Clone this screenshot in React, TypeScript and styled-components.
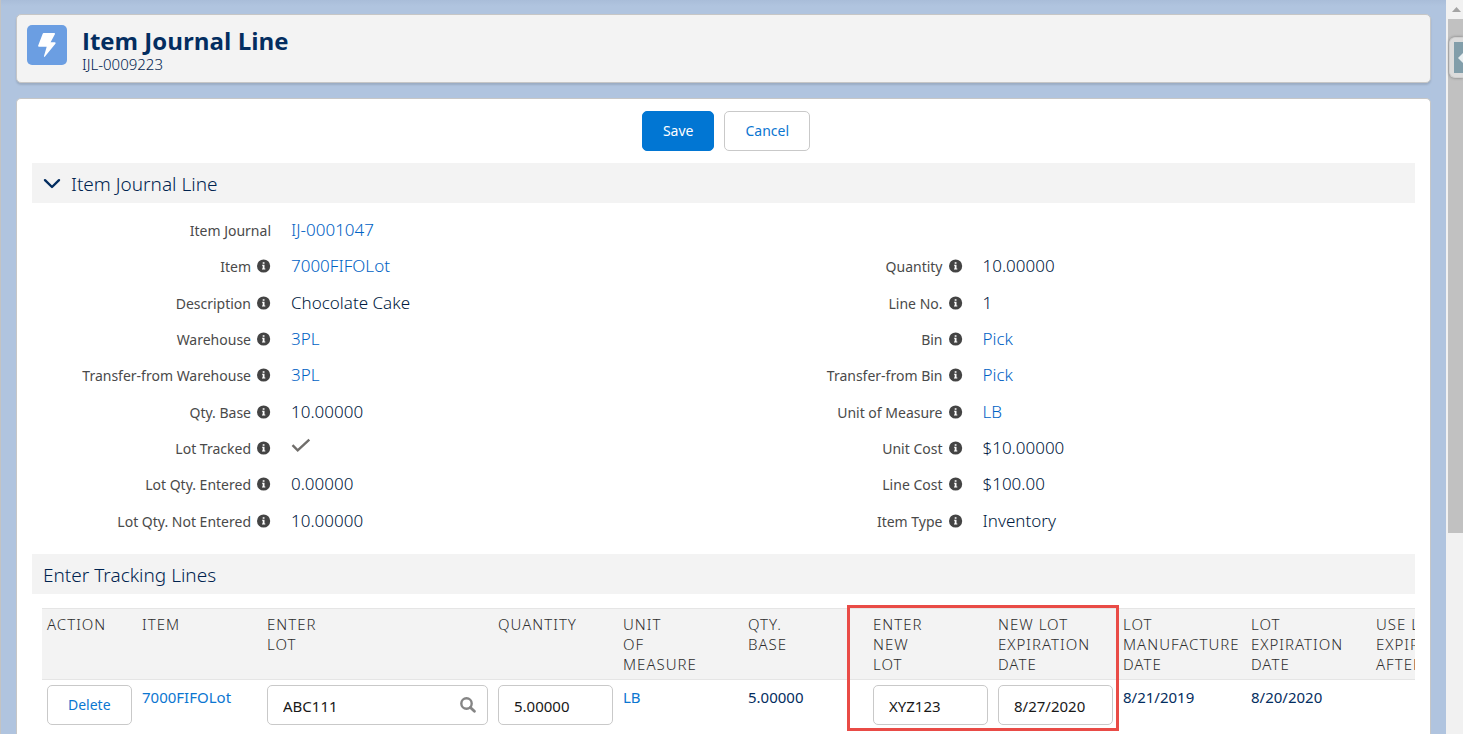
import React from 'react';
import styled, { createGlobalStyle } from 'styled-components';

const GlobalStyle = createGlobalStyle`
  *, *::before, *::after { box-sizing: border-box; }
  body {
    margin: 0;
    background: #b0c4df;
    color: #00234f;
    font-family: 'Noto Sans', 'Open Sans', sans-serif;
    font-size: 15px;
    font-weight: 300;
  }
`;

const Frame = styled.div`
  display: flex;
  height: 100vh;
  overflow: hidden;
`;

const Main = styled.main`
  flex: 1;
  min-width: 0;
  display: flex;
  flex-direction: column;
  gap: 15px;
  padding: 14px 15px 0;
  border-left: 1px solid #c3c3c3;
  background: linear-gradient(#a9bdd9, #b0c4df 6px);
`;

const PageHeader = styled.header`
  display: flex;
  flex: none;
  gap: 15px;
  height: 69px;
  padding: 10px;
  background: #f3f3f3;
  border: 1px solid #c6c6c6;
  border-radius: 5px;
  box-shadow: 0 2px 2px rgba(0, 0, 0, 0.12);
`;

const HeaderIcon = styled.span`
  display: flex;
  align-items: center;
  justify-content: center;
  width: 40px;
  height: 40px;
  border-radius: 5px;
  background: #6b9ee2;
`;

const Title = styled.h1`
  margin: 0;
  color: #032d60;
  font-family: 'Open Sans', 'Noto Sans', sans-serif;
  font-size: 24px;
  line-height: 32px;
  font-weight: 700;
`;

const RecordName = styled.p`
  margin: 0;
  font-size: 15px;
  line-height: 14px;
`;

const Card = styled.section`
  flex: 1 0 auto;
  padding: 12px 15px 0;
  background: #fff;
  border: 1px solid #c6c6c6;
  border-bottom: 0;
  border-radius: 5px 5px 0 0;
`;

const Toolbar = styled.div`
  display: flex;
  justify-content: center;
  gap: 10px;
  padding: 0 0 12px 5px;
`;

const Button = styled.button<{ $primary?: boolean }>`
  height: 40px;
  padding: 0 20px 2px;
  border: 1px solid ${(p) => (p.$primary ? '#0176d3' : '#c9c9c9')};
  border-radius: 5px;
  background: ${(p) => (p.$primary ? '#0176d3' : '#fff')};
  color: ${(p) => (p.$primary ? '#fff' : '#0b76d1')};
  font-family: inherit;
  font-weight: 400;
  font-size: 14px;
  cursor: pointer;
`;

const SectionTitle = styled.h2`
  display: flex;
  align-items: center;
  gap: 10px;
  margin: 0;
  padding: 8px 11px 6px;
  background: #f3f3f3;
  font-size: 19px;
  line-height: 26px;
  font-weight: 300;
`;

const Fields = styled.div`
  display: grid;
  grid-template-columns: 1fr 1fr;
  padding: 10px 0 14px;
`;

const FieldList = styled.dl`
  display: grid;
  grid-template-rows: repeat(9, 1fr);
  margin: 0;
  min-height: 327px;
`;

const Field = styled.div`
  display: grid;
  grid-template-columns: 239px 1fr;
  column-gap: 20px;
  align-items: center;
`;

const Label = styled.dt`
  display: flex;
  align-items: center;
  justify-content: flex-end;
  gap: 6px;
  color: #4a4a4a;
  font-size: 14px;
  font-weight: 400;
  line-height: 20px;
`;

const Link = styled.a`
  color: #0b76d1;
  text-decoration: none;
`;

const Value = styled.dd`
  margin: 0;
  padding-bottom: 2px;
  color: #001a40;
  font-size: 17px;
  line-height: 24px;

  ${Link} {
    color: #0062c4;
  }
`;

const TableArea = styled.div`
  position: relative;
  margin: 14px 0 0 10px;
`;

const TableClip = styled.div`
  overflow: hidden;
`;

const Table = styled.table`
  width: 1454px;
  table-layout: fixed;
  border-collapse: separate;
  border-spacing: 0;
`;

const Th = styled.th`
  height: 72px;
  padding: 5px;
  background: #f3f3f3;
  border: solid #e5e5e5;
  border-width: 1px 0;
  color: #2e2e2e;
  font-size: 15px;
  line-height: 20px;
  font-weight: 300;
  letter-spacing: 1px;
  text-align: left;
  text-transform: uppercase;
  vertical-align: top;
  white-space: pre-line;
`;

const Td = styled.td`
  padding: 5px;
  color: #032d60;
  line-height: 24px;
  font-size: 15px;
  font-weight: 400;
  vertical-align: top;
`;

const InputBox = styled.div`
  position: relative;
  display: flex;
`;

const Input = styled.input`
  width: 100%;
  height: 40px;
  padding: 2px 15px 0;
  border: 1px solid #c9c9c9;
  border-radius: 5px;
  background: #fff;
  color: #181818;
  font-family: inherit;
  font-weight: inherit;
  font-size: 15px;
`;

const LookupButton = styled.button`
  position: absolute;
  top: 12px;
  right: 12px;
  display: flex;
  padding: 0;
  border: 0;
  background: none;
`;

const Highlight = styled.div`
  position: absolute;
  top: -3px;
  left: 805px;
  width: 272px;
  height: 126px;
  border: 3px solid #e94b46;
  pointer-events: none;
`;

const ScrollTrack = styled.div`
  position: relative;
  flex: none;
  width: 17px;
  padding-left: 2px;
  background: #f1f1f1;
`;

const ScrollArrow = styled.div`
  display: flex;
  align-items: center;
  justify-content: center;
  height: 19px;
  padding-left: 2px;
`;

const ScrollThumb = styled.div`
  height: 70vh;
  background: #c1c1c1;
`;

const SideTab = styled.button`
  position: absolute;
  top: 37px;
  right: 0;
  width: 14px;
  height: 41px;
  padding: 4px 0 4px 4px;
  border: 1px solid #d0d0d0;
  border-right: 0;
  border-radius: 6px 0 0 6px;
  background: #dcdcdc;
  box-shadow: 0 0 3px rgba(0, 0, 0, 0.4);
`;

const SideTabFace = styled.span`
  display: flex;
  align-items: center;
  justify-content: flex-end;
  height: 100%;
  background: #829eaa;
`;

const InfoSvg = styled.svg`
  flex: none;
  margin-bottom: 2px;
`;

const CheckSvg = styled.svg`
  display: block;
  margin-bottom: 6px;
`;

const InfoIcon = () => (
  <InfoSvg width="14" height="14" viewBox="0 0 14 14" aria-hidden="true">
    <circle cx="6.6" cy="7" r="6.6" fill="#444" />
    <path d="M5.7 3.2h1.8v1.6H5.7zM5.1 5.8h2.4v3.6h.8v1H5v-1h.7V6.8h-.6z" fill="#fff" />
  </InfoSvg>
);

type FieldData = { label: string; value: React.ReactNode; info?: boolean };

const link = (text: string) => <Link href="#">{text}</Link>;

const CheckMark = () => (
  <CheckSvg width="20" height="15" viewBox="0 0 20 15" role="img" aria-label="Yes">
    <path d="M1.5 7.2l5.2 5.1L18.3 1.6" fill="none" stroke="#706e6b" strokeWidth="2.4" />
  </CheckSvg>
);

const leftFields: FieldData[] = [
  { label: 'Item Journal', value: link('IJ-0001047'), info: false },
  { label: 'Item', value: link('7000FIFOLot') },
  { label: 'Description', value: 'Chocolate Cake' },
  { label: 'Warehouse', value: link('3PL') },
  { label: 'Transfer-from Warehouse', value: link('3PL') },
  { label: 'Qty. Base', value: '10.00000' },
  { label: 'Lot Tracked', value: <CheckMark /> },
  { label: 'Lot Qty. Entered', value: '0.00000' },
  { label: 'Lot Qty. Not Entered', value: '10.00000' },
];

const rightFields: (FieldData | null)[] = [
  null,
  { label: 'Quantity', value: '10.00000' },
  { label: 'Line No.', value: '1' },
  { label: 'Bin', value: link('Pick') },
  { label: 'Transfer-from Bin', value: link('Pick') },
  { label: 'Unit of Measure', value: link('LB') },
  { label: 'Unit Cost', value: '$10.00000' },
  { label: 'Line Cost', value: '$100.00' },
  { label: 'Item Type', value: 'Inventory' },
];

const columns = [
  { title: 'Action', width: 95 },
  { title: 'Item', width: 125 },
  { title: 'Enter\nLot', width: 231 },
  { title: 'Quantity', width: 125 },
  { title: 'Unit\nof\nMeasure', width: 125 },
  { title: 'Qty.\nBase', width: 125 },
  { title: 'Enter\nNew\nLot', width: 125 },
  { title: 'New Lot\nExpiration\nDate', width: 125 },
  { title: 'Lot\nManufacture\nDate', width: 128 },
  { title: 'Lot\nExpiration\nDate', width: 125 },
  { title: 'Use Lot\nExpired\nAfter', width: 125 },
];

const FieldColumn = ({ fields }: { fields: (FieldData | null)[] }) => (
  <FieldList>
    {fields.map((f, i) =>
      f ? (
        <Field key={i}>
          <Label>
            {f.label}
            {f.info !== false && <InfoIcon />}
          </Label>
          <Value>{f.value}</Value>
        </Field>
      ) : (
        <div key={i} />
      ),
    )}
  </FieldList>
);

export default function App() {
  return (
    <>
      <GlobalStyle />
      <Frame>
        <Main>
          <PageHeader>
            <HeaderIcon>
              <svg width="18" height="24" viewBox="0 0 18 24" aria-hidden="true">
                <path
                  d="M5.6 0h10.6c.7 0 1 .6.7 1.2L12.6 9.3h4.2c.8 0 1.1.8.6 1.4L7 23.6c-.5.6-1.2.2-1-.5l2.7-9.4H1c-.7 0-1.1-.6-.8-1.2L4.7.7C4.9.3 5.2 0 5.6 0z"
                  fill="#fff"
                />
              </svg>
            </HeaderIcon>
            <div>
              <Title>Item Journal Line</Title>
              <RecordName>IJL-0009223</RecordName>
            </div>
          </PageHeader>

          <Card>
            <Toolbar>
              <Button type="button" $primary>
                Save
              </Button>
              <Button type="button">Cancel</Button>
            </Toolbar>

            <SectionTitle>
              <svg width="18" height="12" viewBox="0 0 18 12" aria-hidden="true">
                <path d="M2 2.2l7 6.8 7-6.8" fill="none" stroke="#032d60" strokeWidth="2.4" strokeLinecap="round" strokeLinejoin="round" />
              </svg>
              Item Journal Line
            </SectionTitle>

            <Fields>
              <FieldColumn fields={leftFields} />
              <FieldColumn fields={rightFields} />
            </Fields>

            <SectionTitle>Enter Tracking Lines</SectionTitle>

            <TableArea>
              <TableClip>
                <Table>
                  <colgroup>
                    {columns.map((c) => (
                      <col key={c.title} width={c.width} />
                    ))}
                  </colgroup>
                  <thead>
                    <tr>
                      {columns.map((c) => (
                        <Th key={c.title} scope="col">
                          {c.title}
                        </Th>
                      ))}
                    </tr>
                  </thead>
                  <tbody>
                    <tr>
                      <Td>
                        <Button type="button">Delete</Button>
                      </Td>
                      <Td>{link('7000FIFOLot')}</Td>
                      <Td>
                        <InputBox>
                          <Input aria-label="Enter Lot" defaultValue="ABC111" />
                          <LookupButton type="button" aria-label="Search lots">
                            <svg width="16" height="16" viewBox="0 0 16 16" aria-hidden="true">
                              <circle cx="6.5" cy="6.5" r="5.2" fill="none" stroke="#858585" strokeWidth="2.4" />
                              <path d="M10.4 10.4l4 3.8" stroke="#858585" strokeWidth="2.8" strokeLinecap="round" />
                            </svg>
                          </LookupButton>
                        </InputBox>
                      </Td>
                      <Td>
                        <InputBox>
                          <Input aria-label="Quantity" defaultValue="5.00000" />
                        </InputBox>
                      </Td>
                      <Td>{link('LB')}</Td>
                      <Td>5.00000</Td>
                      <Td>
                        <InputBox>
                          <Input aria-label="Enter New Lot" defaultValue="XYZ123" />
                        </InputBox>
                      </Td>
                      <Td>
                        <InputBox>
                          <Input aria-label="New Lot Expiration Date" defaultValue="8/27/2020" />
                        </InputBox>
                      </Td>
                      <Td>8/21/2019</Td>
                      <Td>8/20/2020</Td>
                      <Td />
                    </tr>
                  </tbody>
                </Table>
              </TableClip>
              <Highlight />
            </TableArea>
          </Card>
        </Main>

        <ScrollTrack>
          <ScrollArrow>
            <svg width="9" height="5" viewBox="0 0 9 5" aria-hidden="true">
              <path d="M0 5L4.5 0 9 5z" fill="#a3a3a3" />
            </svg>
          </ScrollArrow>
          <ScrollThumb />
          <SideTab type="button" aria-label="Open side panel">
            <SideTabFace>
              <svg width="5" height="10" viewBox="0 0 5 10" aria-hidden="true">
                <path d="M5 0L0 5l5 5z" fill="#e8eef0" />
              </svg>
            </SideTabFace>
          </SideTab>
        </ScrollTrack>
      </Frame>
    </>
  );
}
